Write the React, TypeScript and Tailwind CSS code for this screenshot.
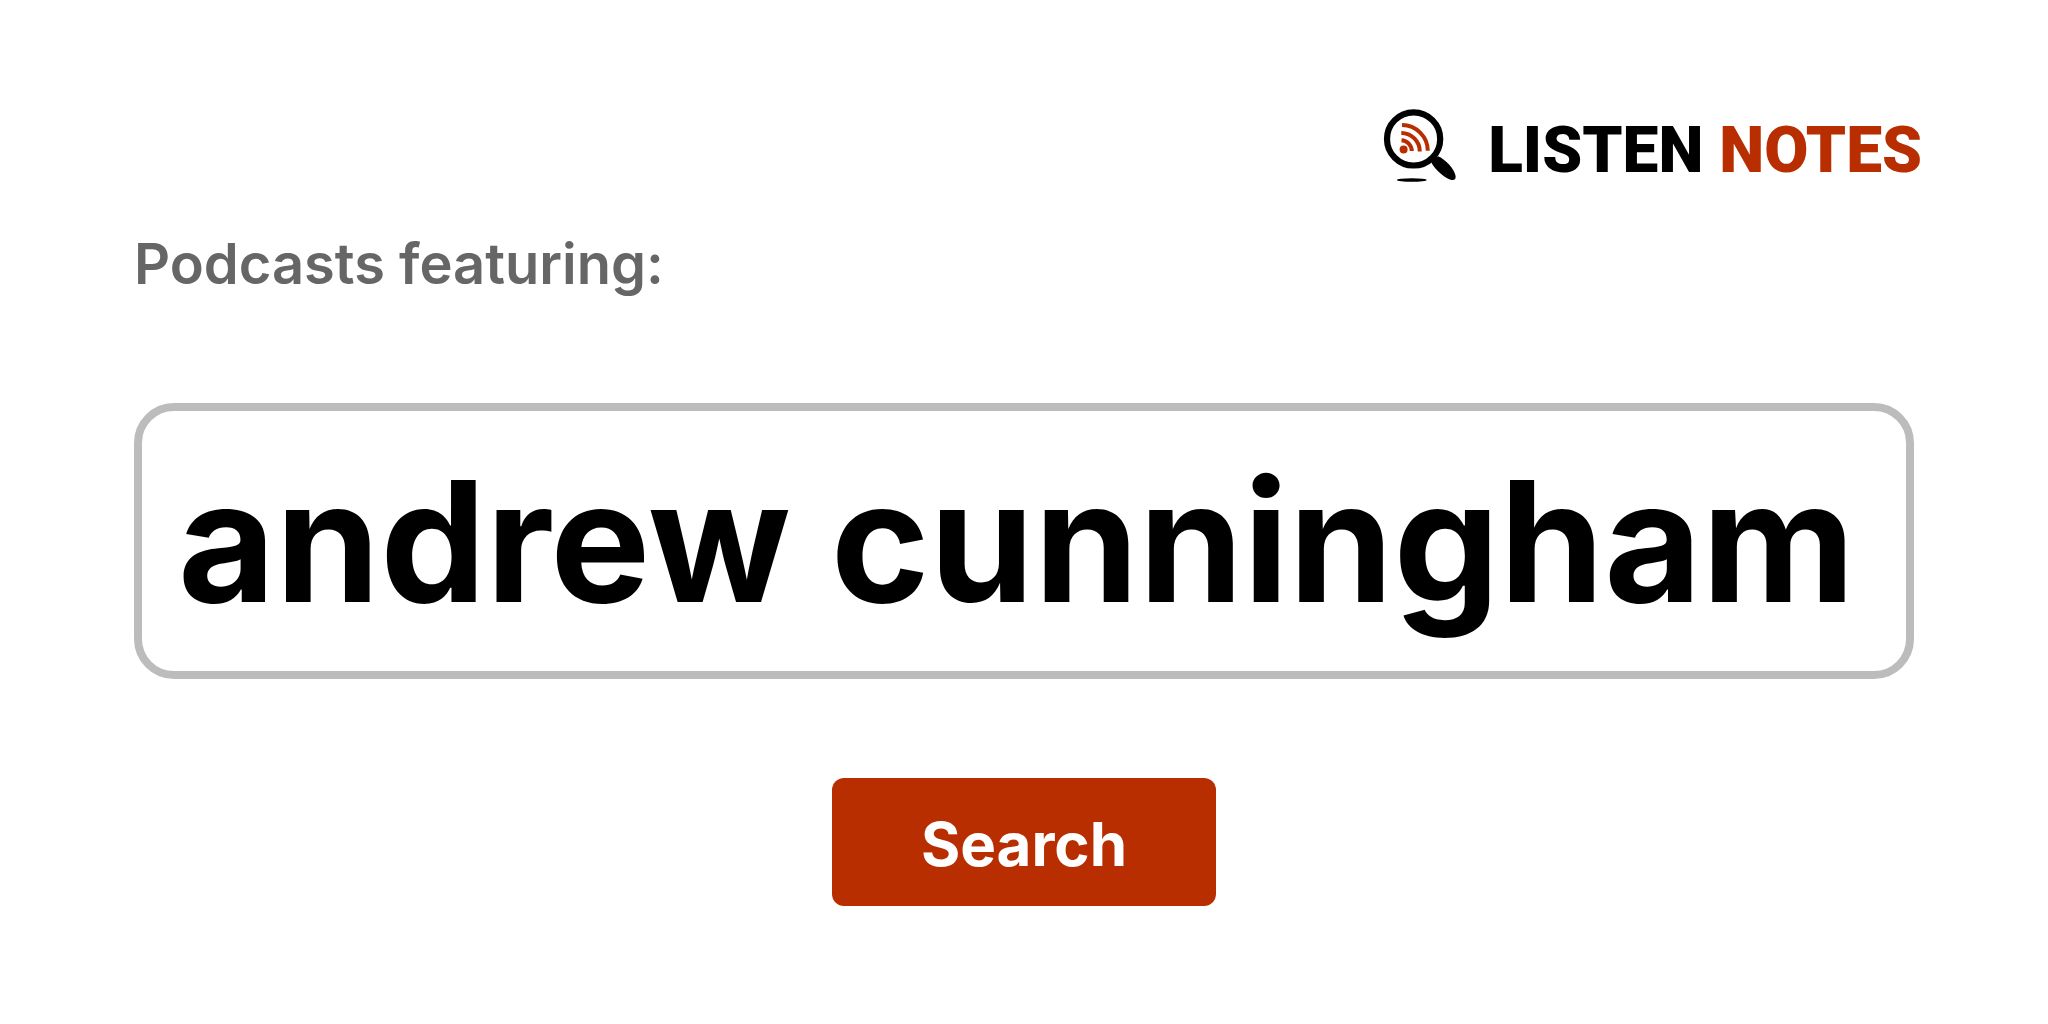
import { useState } from "react";

function LogoMark() {
  return (
    <svg viewBox="0 0 110 100" className="h-[100px] w-[110px]" aria-hidden="true">
      <circle cx="43.6" cy="43.9" r="26.6" fill="none" stroke="#000" strokeWidth="6.2" />
      <path
        d="M61.3 67.5C63 65 65 62.5 68 61.2C75 64 84 73 85.6 81C86 84 84.500 85.500 81.500 85C76 84 66 76 61.3 67.5Z"
        fill="#000"
      />
      <ellipse cx="41.8" cy="85" rx="15" ry="1.8" fill="#000" />
      <circle cx="33.6" cy="54.5" r="4" fill="#b82e00" />
      <g fill="none" stroke="#b82e00" strokeWidth="4">
        <path d="M31.5 45.2A11 11 0 0 1 41.8 56" />
        <path d="M31.3 38A18.5 18.5 0 0 1 49.8 56.5" />
        <path d="M32 30A26 26 0 0 1 57.8 55.8" />
      </g>
    </svg>
  );
}

export default function App() {
  const [query, setQuery] = useState("andrew cunningham");

  return (
    <main className="min-h-screen bg-white px-[134px] pt-[95px] font-['Inter',sans-serif]">
      <header className="flex justify-end">
        <a href="/" className="-mr-2 flex items-center gap-2">
          <LogoMark />
          <span className="pt-3 font-['Roboto',sans-serif] text-[64px] leading-none font-black text-black">
            LISTEN <span className="text-[#b82e00]">NOTES</span>
          </span>
        </a>
      </header>
      <form onSubmit={(e) => e.preventDefault()} className="flex flex-col items-center">
        <label
          htmlFor="query"
          className="mt-[33px] self-start text-[56px] leading-[72px] font-semibold text-[#666]"
        >
          Podcasts featuring:
        </label>
        <input
          id="query"
          type="text"
          value={query}
          onChange={(e) => setQuery(e.target.value)}
          className="mt-[103px] h-[276px] w-full rounded-[40px] border-8 border-[#bcbcbc] px-9 text-[168px] font-bold text-black outline-none"
        />
        <button
          type="submit"
          className="mt-[99px] h-32 w-96 rounded-xl bg-[#b82e00] pt-1 text-[60px] font-bold text-white"
        >
          Search
        </button>
      </form>
    </main>
  );
}
